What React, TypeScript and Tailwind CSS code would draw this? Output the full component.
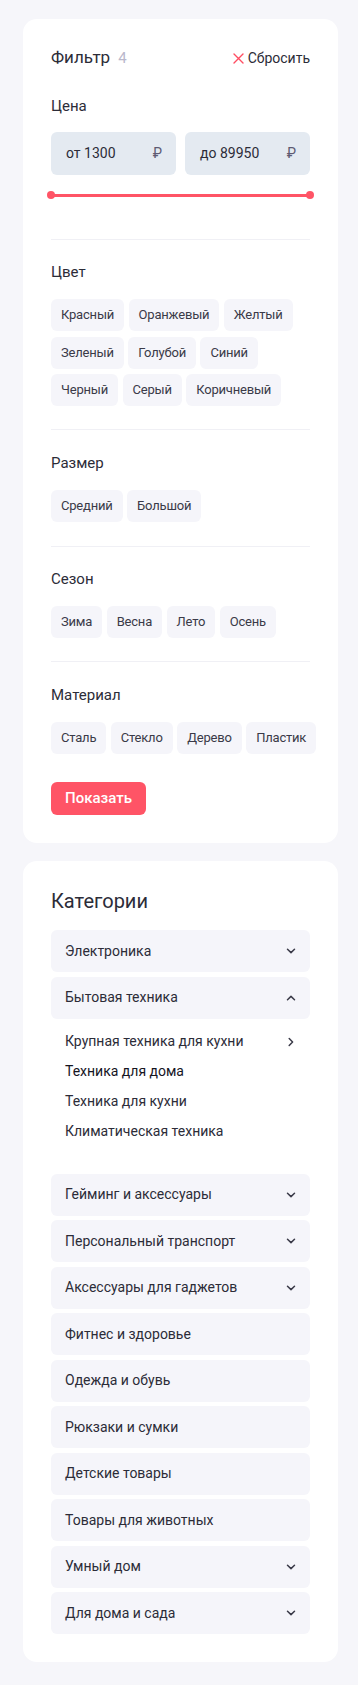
import React from "react";

const font = { fontFamily: 'Roboto, "Noto Sans", sans-serif' };

function ChevronDown() {
  return (
    <svg width="10" height="6" viewBox="0 0 10 6" fill="none" className="shrink-0">
      <path d="M1.5 1.2 L5 4.6 L8.5 1.2" stroke="#3a3a48" strokeWidth="1.5" strokeLinecap="round" strokeLinejoin="round" />
    </svg>
  );
}
function ChevronUp() {
  return (
    <svg width="10" height="6" viewBox="0 0 10 6" fill="none" className="shrink-0">
      <path d="M1.5 4.8 L5 1.4 L8.5 4.8" stroke="#3a3a48" strokeWidth="1.5" strokeLinecap="round" strokeLinejoin="round" />
    </svg>
  );
}
function ChevronRight() {
  return (
    <svg width="6" height="10" viewBox="0 0 6 10" fill="none" className="shrink-0">
      <path d="M1.2 1.5 L4.6 5 L1.2 8.5" stroke="#3a3a48" strokeWidth="1.5" strokeLinecap="round" strokeLinejoin="round" />
    </svg>
  );
}

function Chips({ items, nowrap }: { items: string[]; nowrap?: boolean }) {
  return (
    <div className={nowrap ? "mt-[17px] flex flex-nowrap gap-x-[4.5px]" : "mt-[17px] flex flex-wrap gap-x-[4.5px] gap-y-[5.5px]"}>
      {items.map((t) => (
        <div key={t} className="shrink-0 h-[32px] px-[10px] flex items-center rounded-[6px] bg-[#f5f5fa] text-[13px] tracking-[-0.2px] text-[#3a3a48] whitespace-nowrap">
          {t}
        </div>
      ))}
    </div>
  );
}

function Label({ children, mt }: { children: React.ReactNode; mt: string }) {
  return <div className={`${mt} h-[20px] leading-[20px] text-[15px] text-[#2c2c38]`}>{children}</div>;
}

const cats: { name: string; chev?: "down" | "up" }[] = [
  { name: "Гейминг и аксессуары", chev: "down" },
  { name: "Персональный транспорт", chev: "down" },
  { name: "Аксессуары для гаджетов", chev: "down" },
  { name: "Фитнес и здоровье" },
  { name: "Одежда и обувь" },
  { name: "Рюкзаки и сумки" },
  { name: "Детские товары" },
  { name: "Товары для животных" },
  { name: "Умный дом", chev: "down" },
  { name: "Для дома и сада", chev: "down" },
];

function CatItem({ name, chev }: { name: string; chev?: "down" | "up" }) {
  return (
    <div className="h-[42px] rounded-[6px] bg-[#f5f5fa] pl-[14px] pr-[14px] flex items-center justify-between text-[14px] text-[#2c2c38]">
      <span>{name}</span>
      {chev === "down" && <ChevronDown />}
      {chev === "up" && <ChevronUp />}
    </div>
  );
}

export default function App() {
  return (
    <div style={font} className="min-h-screen bg-[#f6f6fa] pt-[19px] pb-[23px]">
      <div className="ml-[23px] mr-[20px] rounded-[14px] bg-white px-[28px] pt-[27px] pb-[28px]">
        <div className="h-[24px] flex items-center justify-between">
          <div className="flex items-baseline gap-[8px]">
            <span className="text-[17px] text-[#2c2c38]">Фильтр</span>
            <span className="text-[15px] text-[#b9b8cc]">4</span>
          </div>
          <div className="flex items-center gap-[4px] text-[14px] text-[#2c2c38]">
            <svg width="11" height="11" viewBox="0 0 11 11" fill="none">
              <path d="M1 1 L10 10 M10 1 L1 10" stroke="#ff4d62" strokeWidth="1.4" strokeLinecap="round" />
            </svg>
            <span>Сбросить</span>
          </div>
        </div>

        <Label mt="mt-[26px]">Цена</Label>
        <div className="mt-[16px] grid grid-cols-2 gap-[9px]">
          <div className="h-[43px] rounded-[6px] bg-[#e4eaf1] pl-[15px] pr-[14px] flex items-center justify-between text-[14px] text-[#2c2c38]">
            <span>от 1300</span>
            <span className="text-[#5e5a72]">₽</span>
          </div>
          <div className="h-[43px] rounded-[6px] bg-[#e4eaf1] pl-[15px] pr-[14px] flex items-center justify-between text-[14px] text-[#2c2c38]">
            <span>до 89950</span>
            <span className="text-[#5e5a72]">₽</span>
          </div>
        </div>
        <div className="mt-[15px] relative h-[10px]">
          <div className="absolute left-0 right-0 top-[3.5px] h-[3px] bg-[#ff5466] rounded-full" />
          <div className="absolute left-[-4px] top-[1px] w-[8px] h-[8px] rounded-full bg-[#ff5466]" />
          <div className="absolute right-[-4px] top-[1px] w-[8px] h-[8px] rounded-full bg-[#ff5466]" />
        </div>
        <div className="mt-[39px] h-px bg-[#f0f0f5]" />

        <Label mt="mt-[22px]">Цвет</Label>
        <Chips items={["Красный", "Оранжевый", "Желтый", "Зеленый", "Голубой", "Синий", "Черный", "Серый", "Коричневый"]} />
        <div className="mt-[23px] h-px bg-[#f0f0f5]" />

        <Label mt="mt-[23px]">Размер</Label>
        <Chips items={["Средний", "Большой"]} />
        <div className="mt-[24px] h-px bg-[#f0f0f5]" />

        <Label mt="mt-[22px]">Сезон</Label>
        <Chips items={["Зима", "Весна", "Лето", "Осень"]} />
        <div className="mt-[23px] h-px bg-[#f0f0f5]" />

        <Label mt="mt-[23px]">Материал</Label>
        <Chips nowrap items={["Сталь", "Стекло", "Дерево", "Пластик"]} />

        <button className="mt-[28px] h-[33px] w-[95px] rounded-[6px] bg-[#ff5466] text-white text-[15px] font-medium flex items-center justify-center">
          Показать
        </button>
      </div>

      <div className="ml-[23px] mr-[20px] mt-[18px] rounded-[14px] bg-white px-[28px] pt-[26px] pb-[28px]">
        <div className="h-[28px] leading-[28px] text-[20px] text-[#2c2c38]">Категории</div>
        <div className="mt-[15px] flex flex-col gap-[4.5px]">
          <CatItem name="Электроника" chev="down" />
          <CatItem name="Бытовая техника" chev="up" />
        </div>
        <div className="mt-[8px] flex flex-col">
          <div className="h-[30px] pl-[14px] pr-[16px] flex items-center justify-between text-[14px] text-[#2c2c38]">
            <span>Крупная техника для кухни</span>
            <ChevronRight />
          </div>
          <div className="h-[30px] pl-[14px] flex items-center text-[14px] text-[#15151f]">Техника для дома</div>
          <div className="h-[30px] pl-[14px] flex items-center text-[14px] text-[#2c2c38]">Техника для кухни</div>
          <div className="h-[30px] pl-[14px] flex items-center text-[14px] text-[#2c2c38]">Климатическая техника</div>
        </div>
        <div className="mt-[27px] flex flex-col gap-[4.5px]">
          {cats.map((c) => (
            <CatItem key={c.name} name={c.name} chev={c.chev} />
          ))}
        </div>
      </div>
    </div>
  );
}
